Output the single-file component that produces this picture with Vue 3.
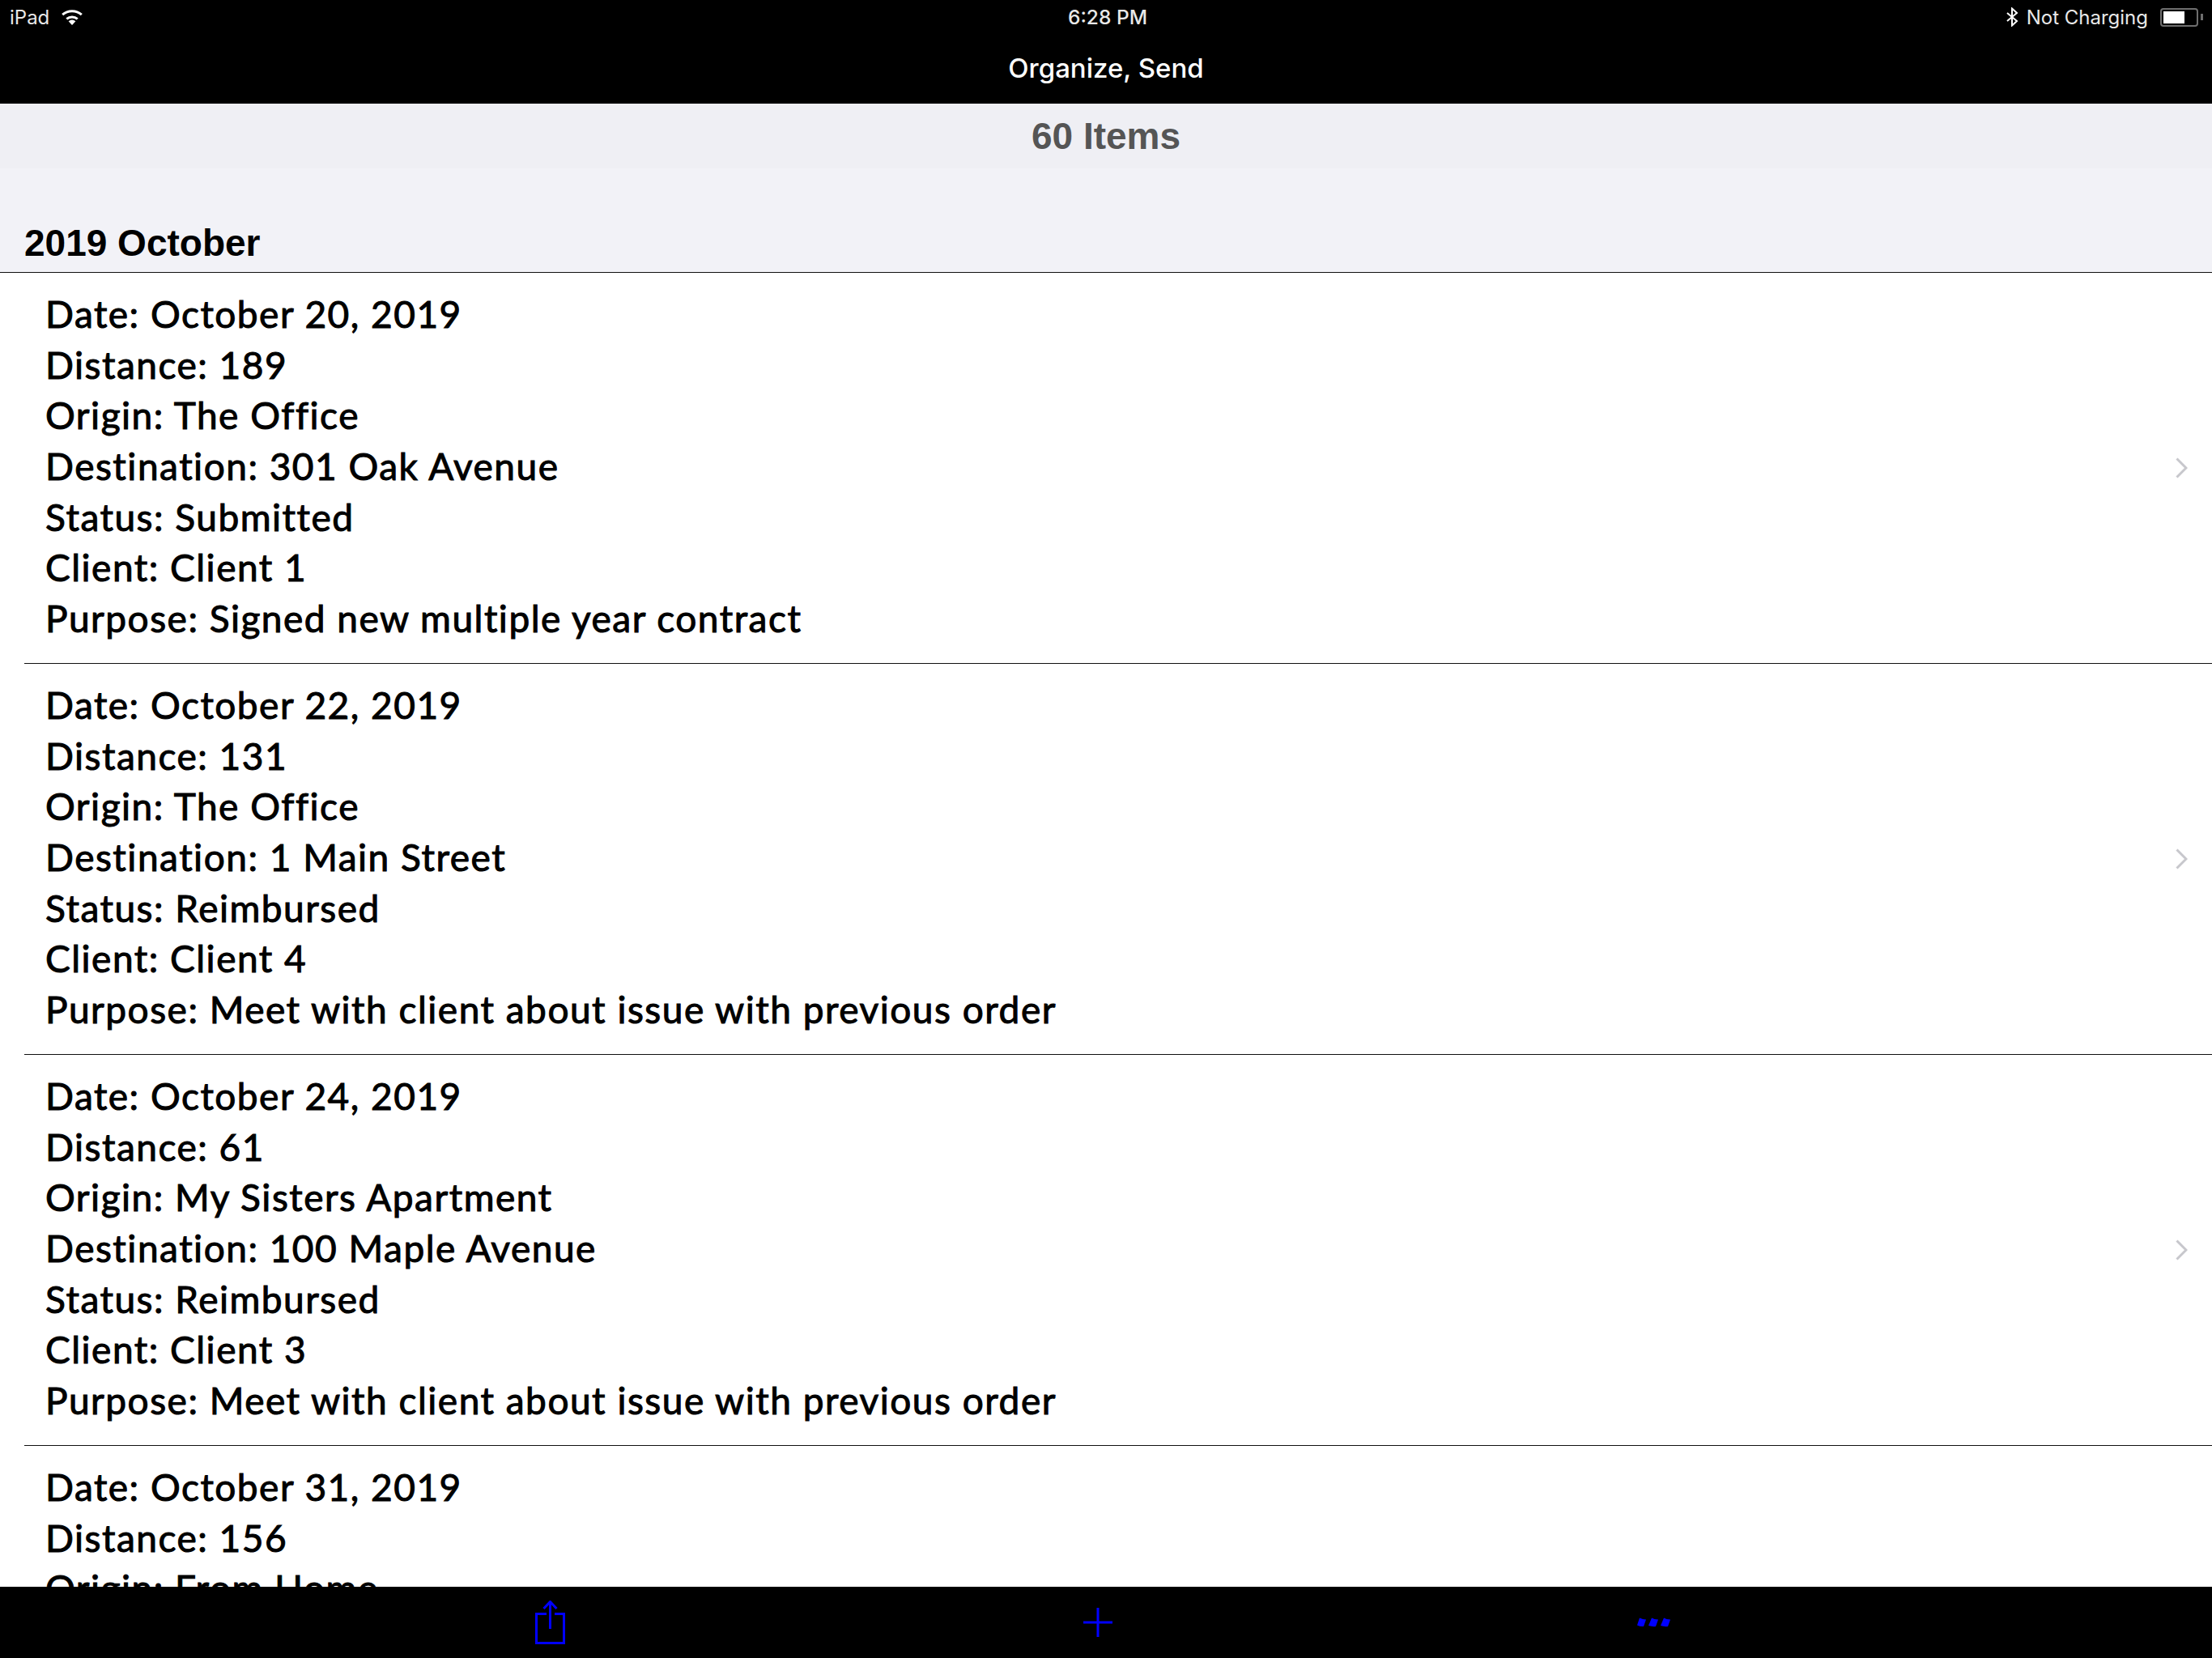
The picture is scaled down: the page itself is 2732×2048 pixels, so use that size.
<template>
  <div class="screen">
    <header class="top">
      <div class="status">
        <div class="status-left">
          <span>iPad</span>
          <svg class="wifi" viewBox="0 0 28 20" width="28" height="20">
            <path d="M14 20 L9.6 15.2 A7 7 0 0 1 18.4 15.2 Z" fill="#fff" />
            <path d="M7.3 12.4 A10.6 10.6 0 0 1 20.7 12.4" fill="none" stroke="#fff" stroke-width="3" />
            <path d="M2.2 7.2 A17.6 17.6 0 0 1 25.8 7.2" fill="none" stroke="#fff" stroke-width="3" />
          </svg>
        </div>
        <div class="status-time">6:28 PM</div>
        <div class="status-right">
          <svg class="bt" viewBox="0 0 16 24" width="16" height="24">
            <path d="M2 7 L14 17 L8 22.500 L8 1.500 L14 7 L2 17" fill="none" stroke="#fff" stroke-width="2" />
          </svg>
          <span>Not Charging</span>
          <div class="battery">
            <div class="battery-body"><div class="battery-fill" :style="{ width: '67%' }"></div></div>
            <div class="battery-tip"></div>
          </div>
        </div>
      </div>
      <div class="nav-title">Organize, Send</div>
    </header>

    <div class="count">60 Items</div>

    <main class="list">
      <div class="section-head">2019 October</div>
      <div v-for="(trip, i) in trips" :key="i" class="row">
        <div class="row-text">
          <div v-for="line in trip" :key="line" class="line">{{ line }}</div>
        </div>
        <svg class="chevron" viewBox="0 0 15 26" width="15" height="26">
          <path d="M1.500 1.500 L13 13 L1.500 24.500" fill="none" stroke="#c7c7cc" stroke-width="3" />
        </svg>
      </div>
    </main>

    <footer class="bottom">
      <button class="tool">
        <svg viewBox="0 0 37 54" width="37" height="54">
          <path d="M14 16.500 H1.500 V52.500 H35.500 V16.500 H24" fill="none" stroke="#0000ff" stroke-width="3" />
          <path d="M18.500 35 V2 M10.500 10 L18.500 1.500 L26.500 10" fill="none" stroke="#0000ff" stroke-width="3" />
        </svg>
      </button>
      <button class="tool">
        <svg viewBox="0 0 36 36" width="36" height="36">
          <path d="M18 0 V36 M0 18 H36" fill="none" stroke="#0000ff" stroke-width="3" />
        </svg>
      </button>
      <button class="tool">
        <svg viewBox="0 0 42 12" width="42" height="12">
          <path d="M4 0.500 Q8 2.500 12 2.500 L9 11 Q5 11.500 1 9.500 Z M19 0.500 Q22 2.500 27 2.500 L24 11 Q20 11.500 15 10 Z M34 0.500 Q37 2.500 42 2.500 L39 11 Q34 11.500 30 10 Z" fill="#0000ff" />
        </svg>
      </button>
    </footer>
  </div>
</template>

<script setup>
// last row is cut off by the toolbar, only its visible lines are listed
const trips = [
  [
    'Date: October 20, 2019',
    'Distance: 189',
    'Origin: The Office',
    'Destination: 301 Oak Avenue',
    'Status: Submitted',
    'Client: Client 1',
    'Purpose: Signed new multiple year contract'
  ],
  [
    'Date: October 22, 2019',
    'Distance: 131',
    'Origin: The Office',
    'Destination: 1 Main Street',
    'Status: Reimbursed',
    'Client: Client 4',
    'Purpose: Meet with client about issue with previous order'
  ],
  [
    'Date: October 24, 2019',
    'Distance: 61',
    'Origin: My Sisters Apartment',
    'Destination: 100 Maple Avenue',
    'Status: Reimbursed',
    'Client: Client 3',
    'Purpose: Meet with client about issue with previous order'
  ],
  [
    'Date: October 31, 2019',
    'Distance: 156',
    'Origin: From Home'
  ]
]
</script>

<style scoped>
.screen {
  width: 2732px;
  height: 2048px;
  display: flex;
  flex-direction: column;
  overflow: hidden;
  background: #fff;
  font-family: "Inter", "Liberation Sans", sans-serif;
}

.top {
  height: 128px;
  flex: none;
  background: #000;
  color: #fff;
}

.status {
  height: 42px;
  padding: 0 11px 0 12px;
  display: grid;
  grid-template-columns: 1fr auto 1fr;
  align-items: center;
  font-size: 24px;
  color: #e8e8e8;
}

.status-left {
  display: flex;
  align-items: center;
  gap: 14px;
}

.status-time {
  margin-left: 3px;
  font-size: 24.5px;
  font-weight: 500;
}

.status-right {
  display: flex;
  align-items: center;
  justify-content: flex-end;
  gap: 10px;
}

.battery {
  margin-left: 5px;
  display: flex;
  align-items: center;
  gap: 3px;
}

.battery-body {
  width: 47px;
  height: 23px;
  padding: 2px;
  box-sizing: border-box;
  border: 2px solid #6e6e6e;
  border-radius: 4px;
}

.battery-fill {
  height: 100%;
  background: #fff;
}

.battery-tip {
  width: 3px;
  height: 8px;
  background: #6e6e6e;
}

.nav-title {
  height: 86px;
  padding-top: 3px;
  box-sizing: border-box;
  text-align: center;
  line-height: 78px;
  font-size: 33px;
  font-weight: 500;
}

.count {
  height: 80px;
  flex: none;
  background: #efeff4;
  text-align: center;
  line-height: 80px;
  font-family: "Liberation Sans", Arial, sans-serif;
  font-weight: 700;
  font-size: 46px;
  color: #555;
}

.list {
  flex: 1;
  min-height: 0;
  overflow: hidden;
}

.section-head {
  height: 129px;
  box-sizing: border-box;
  padding: 60px 0 0 30px;
  line-height: 64px;
  background: #f2f2f7;
  border-bottom: 1px solid #111;
  font-family: "Liberation Sans", Arial, sans-serif;
  font-weight: 700;
  font-size: 46px;
  color: #000;
}

.row {
  margin-left: 30px;
  height: 483px;
  box-sizing: border-box;
  padding: 20px 30px 0 26px;
  display: flex;
  align-items: flex-start;
  justify-content: space-between;
  border-bottom: 1px solid #111;
}

.row:first-of-type {
  height: 482px;
}

.chevron {
  align-self: center;
  margin-top: -21px;
}

.line {
  height: 62.7px;
  line-height: 62.7px;
  font-family: "Lato", "Noto Sans", sans-serif;
  font-size: 46px;
  letter-spacing: 1.5px;
  color: #000;
  white-space: nowrap;
  -webkit-text-stroke: 1px #000;
}

.bottom {
  height: 88px;
  flex: none;
  padding-left: 340px;
  background: #000;
  display: grid;
  grid-template-columns: 678px 676px 696px;
  align-items: center;
}

.tool {
  padding: 0;
  border: 0;
  background: none;
  display: flex;
  justify-content: center;
}
</style>
